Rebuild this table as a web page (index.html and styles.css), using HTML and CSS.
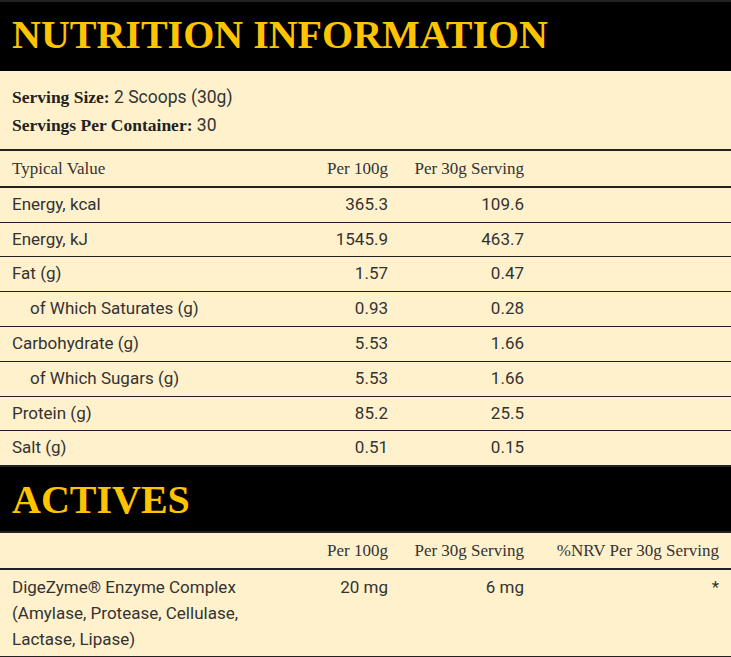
FILE: index.html
```html
<!DOCTYPE html>
<html lang="en">
<head>
<meta charset="utf-8">
<title>Nutrition Information</title>
<link rel="stylesheet" href="styles.css">
</head>
<body>
<div class="panel">
  <h2 class="band band-first">NUTRITION INFORMATION</h2>
  <div class="serving">
    <p><b>Serving Size:</b> 2 Scoops (30g)</p>
    <p><b>Servings Per Container:</b> 30</p>
  </div>
  <div class="table">
    <div class="row head">
      <span>Typical Value</span><span class="num">Per 100g</span><span class="num">Per 30g Serving</span><span></span>
    </div>
    <div class="row"><span>Energy, kcal</span><span class="num">365.3</span><span class="num">109.6</span><span></span></div>
    <div class="row"><span>Energy, kJ</span><span class="num">1545.9</span><span class="num">463.7</span><span></span></div>
    <div class="row"><span>Fat (g)</span><span class="num">1.57</span><span class="num">0.47</span><span></span></div>
    <div class="row"><span class="sub">of Which Saturates (g)</span><span class="num">0.93</span><span class="num">0.28</span><span></span></div>
    <div class="row"><span>Carbohydrate (g)</span><span class="num">5.53</span><span class="num">1.66</span><span></span></div>
    <div class="row"><span class="sub">of Which Sugars (g)</span><span class="num">5.53</span><span class="num">1.66</span><span></span></div>
    <div class="row"><span>Protein (g)</span><span class="num">85.2</span><span class="num">25.5</span><span></span></div>
    <div class="row last"><span>Salt (g)</span><span class="num">0.51</span><span class="num">0.15</span><span></span></div>
  </div>
  <h2 class="band band-second">ACTIVES</h2>
  <div class="table">
    <div class="row head">
      <span></span><span class="num">Per 100g</span><span class="num">Per 30g Serving</span><span class="num">%NRV Per 30g Serving</span>
    </div>
    <div class="row tall"><span>DigeZyme® Enzyme Complex (Amylase, Protease, Cellulase, Lactase, Lipase)</span><span class="num">20 mg</span><span class="num">6 mg</span><span class="num">*</span></div>
  </div>
</div>
</body>
</html>
```
FILE: styles.css
```css
html, body {
  margin: 0;
  padding: 0;
  background: #fff1cc;
}

.panel {
  width: 731px;
  background: #fff1cc;
  color: #333;
  font-family: Roboto, "Liberation Sans", sans-serif;
  font-size: 17px;
}

.band {
  margin: 0;
  background: #000;
  color: #ffc300;
  font-family: "Liberation Serif", "Times New Roman", serif;
  font-weight: bold;
  font-size: 40px;
  line-height: 46px;
  padding: 10px 12px 13px;
  border-top: 2px solid #222;
}

.band-second {
  padding-bottom: 8px;
}

.serving {
  padding: 12px 12px 10px;
  font-size: 17.5px;
}

.serving p {
  margin: 0;
  line-height: 28px;
}

.serving b {
  font-family: "Liberation Serif", "Times New Roman", serif;
  font-weight: bold;
  color: #222;
}

.table {
  border-top: 2px solid #222;
}

.row {
  display: grid;
  grid-template-columns: 264px 136px 136px 1fr;
  border-bottom: 1px solid #222;
}

.row.last {
  border-bottom: none;
}

.row > span {
  padding: 4px 12px 4px;
  line-height: 25.8px;
}

.row.tall > span {
  line-height: 26px;
}

.row.head {
  border-bottom: 2px solid #222;
  font-family: "Liberation Serif", "Times New Roman", serif;
}

.row.head > span {
  padding-top: 5px;
}

.num {
  text-align: right;
}

.row > span.sub {
  padding-left: 30px;
}
```
